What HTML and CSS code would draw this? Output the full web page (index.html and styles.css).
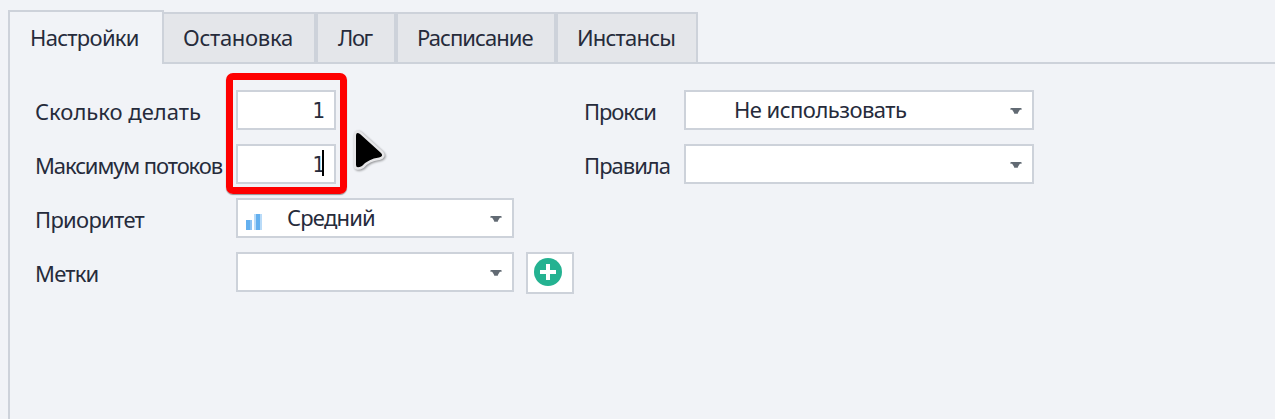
FILE: index.html
```html
<!DOCTYPE html>
<html lang="ru">
<head>
<meta charset="utf-8">
<title>Настройки</title>
<link rel="stylesheet" href="styles.css">
</head>
<body>
<nav class="tabs">
  <div class="tab active"><span class="t-settings">Настройки</span></div>
  <div class="tab w-stop"><span class="t-stop">Остановка</span></div>
  <div class="tab w-log"><span class="t-log">Лог</span></div>
  <div class="tab w-schedule"><span class="t-schedule">Расписание</span></div>
  <div class="tab w-instances"><span class="t-instances">Инстансы</span></div>
  <div class="tab-rest"></div>
</nav>
<main class="panel">
  <section class="form left">
    <div class="row">
      <label class="l-count">Сколько делать</label>
      <div class="field number"><span>1</span></div>
    </div>
    <div class="row">
      <label class="l-threads">Максимум потоков</label>
      <div class="field number"><span>1</span><i class="caret"></i></div>
    </div>
    <div class="row">
      <label class="l-priority">Приоритет</label>
      <div class="field select">
        <svg class="bars" width="16" height="18" viewBox="0 0 16 18" shape-rendering="crispEdges"><path fill="#64b0ef" d="M0 7h4v10H0zM10 1h4v16h-4z"/><path fill="#8fc4f3" d="M4 7h2v10H4z"/><path fill="#b9dbf8" d="M8 1h2v16H8zM14 1h2v16h-2z"/></svg>
        <span class="v-medium">Средний</span>
        <svg class="arrow" width="12" height="6" viewBox="0 0 12 6"><path d="M1 0h10v1.500H1zM2 1.500h8L7.500 5.500h-3z"/><path class="soft" d="M0 0h12v2H0zM4 4h4v2H4z"/></svg>
      </div>
    </div>
    <div class="row">
      <label class="l-tags">Метки</label>
      <div class="field select">
        <svg class="arrow" width="12" height="6" viewBox="0 0 12 6"><path d="M1 0h10v1.500H1zM2 1.500h8L7.500 5.500h-3z"/><path class="soft" d="M0 0h12v2H0zM4 4h4v2H4z"/></svg>
      </div>
      <div class="add"><svg width="28" height="28" viewBox="0 0 28 28"><circle cx="14" cy="14" r="14" fill="#24b291"/><path fill="#fff" d="M12 6h4v6h6v4h-6v6h-4v-6H6v-4h6z"/></svg></div>
    </div>
  </section>
  <section class="form right">
    <div class="row">
      <label class="l-proxy">Прокси</label>
      <div class="field select">
        <span class="v-none">Не использовать</span>
        <svg class="arrow" width="12" height="6" viewBox="0 0 12 6"><path d="M1 0h10v1.500H1zM2 1.500h8L7.500 5.500h-3z"/><path class="soft" d="M0 0h12v2H0zM4 4h4v2H4z"/></svg>
      </div>
    </div>
    <div class="row">
      <label class="l-rules">Правила</label>
      <div class="field select">
        <svg class="arrow" width="12" height="6" viewBox="0 0 12 6"><path d="M1 0h10v1.500H1zM2 1.500h8L7.500 5.500h-3z"/><path class="soft" d="M0 0h12v2H0zM4 4h4v2H4z"/></svg>
      </div>
    </div>
  </section>
</main>
<div class="highlight"></div>
<svg class="pointer" width="36" height="46" viewBox="0 0 36 46"><path d="M6 8Q6 3 10 6L31 25Q34 28 29 29.500Q18 31 12 38Q6 41 6 37Z"/></svg>
</body>
</html>
```
FILE: styles.css
```css
* { box-sizing: border-box; }
body {
  margin: 0;
  height: 419px;
  overflow: hidden;
  display: flex;
  flex-direction: column;
  background: #f1f3f7;
  color: #262b3b;
  font: 22px/28px "Noto Sans", "Open Sans", sans-serif;
  white-space: nowrap;
}
.tabs { display: flex; align-items: flex-end; height: 64px; padding-left: 8px; flex: none; }
.tab {
  height: 52px;
  padding: 9px 0 0 19px;
  background: #e4e6ea;
  border: 2px solid #cdd2da;
}
.tab.active {
  width: 156px;
  height: 54px;
  padding: 11px 0 0 20px;
  background: #f1f3f7;
  border-bottom: 0;
}
.w-stop { width: 152px; border-left: 0; }
.w-log { width: 80px; padding-left: 20px; }
.w-schedule { width: 160px; }
.w-instances { width: 142px; }
.tab-rest { flex: 1; height: 2px; background: #cdd2da; }
.t-settings { letter-spacing: -.7px; }
.t-stop { letter-spacing: -.3px; }
.t-log { letter-spacing: -1.4px; }
.t-schedule { letter-spacing: -.95px; }
.t-instances { letter-spacing: -.8px; }

.panel { flex: 1; display: flex; margin-left: 8px; padding: 26px 0 0 25px; border-left: 2px solid #cdd2da; }
.form { display: flex; flex-direction: column; gap: 14px; }
.left { width: 549px; }
.row { display: flex; height: 40px; }
label { width: 201px; padding-top: 7px; }
.right label { width: 100px; }
.l-threads { letter-spacing: -1.1px; }
.l-priority { letter-spacing: -.7px; }
.l-tags { letter-spacing: -.8px; }
.l-proxy { letter-spacing: -1.1px; }
.l-rules { letter-spacing: -1px; }
.field {
  height: 40px;
  display: flex;
  background: #fff;
  border: 2px solid #cdd2da;
  padding-top: 3px;
}
.number {
  width: 100px;
  justify-content: flex-end;
  padding: 5px 9px 0 0;
  position: relative;
  font-family: "DejaVu Sans Condensed", "DejaVu Sans", sans-serif;
  font-stretch: condensed;
}
.caret { position: absolute; left: 84px; top: 4px; width: 2px; height: 26px; background: #000; }
.select { width: 278px; }
.right .select { width: 350px; }
.bars { margin: 10px 25px 0 8px; }
.v-medium { letter-spacing: -.8px; }
.v-none { margin-left: 48px; letter-spacing: -.53px; }
.arrow { margin: 13px 10px 0 auto; fill: #626a73; }
.soft { opacity: .45; }
.add { width: 48px; height: 42px; margin-left: 12px; padding: 4px 6px; background: #fff; border: 2px solid #cdd2da; }
.add svg { display: block; }

.highlight {
  position: absolute;
  left: 226px;
  top: 73px;
  width: 121px;
  height: 121px;
  border: 7px solid #fe0000;
  border-radius: 7px;
  box-shadow: 0 1px 1px rgba(0, 0, 0, .4);
}
.pointer { position: absolute; left: 350px; top: 128px; overflow: visible; filter: drop-shadow(1px 1px 1px rgba(0, 0, 0, .4)); }
.pointer path { fill: #000; stroke: #e6e6e8; stroke-width: 5px; stroke-linejoin: round; paint-order: stroke; }
```
